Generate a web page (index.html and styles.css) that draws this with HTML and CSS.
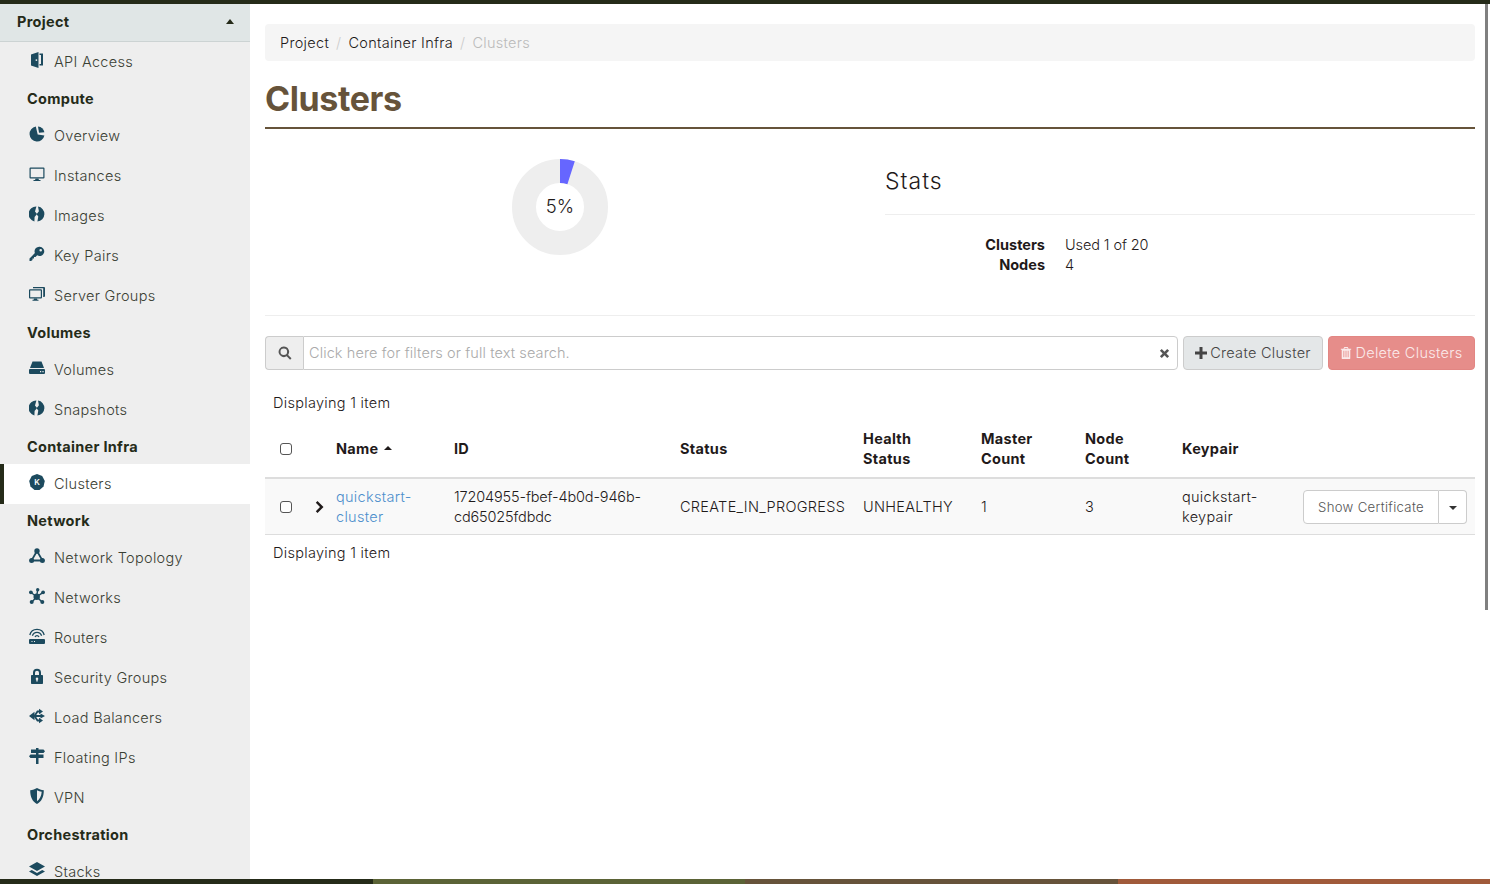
FILE: index.html
```html
<!DOCTYPE html>
<html lang="en">
<head>
    <meta charset="UTF-8">
    <title>Clusters</title>
    <link rel="stylesheet" href="styles.css">
</head>
<body>
    <div class="topbar"></div>
    <div class="layout">
        <nav class="sidebar">
            <div class="nav-project"><span>Project</span><i class="caret-up"></i></div>
            <a class="nav-item"><svg class="icon" viewBox="0 0 16 16"><path fill-rule="evenodd" d="M2 2.500 9.500 0v16L2 13.500zM7.400 7.200a.9.9 0 1 0 0 1.800.9.9 0 0 0 0-1.800z"/><path d="M10.500 1.500H14v12h-3.500v-1.600H12V3h-1.500z"/></svg>API Access</a>
            <div class="nav-group">Compute</div>
            <a class="nav-item"><svg class="icon" viewBox="0 0 16 16"><path d="M6.800 .6A7.500 7.500 0 1 0 15.400 9.500L8.700 8.500z"/><path d="M9 .6 10 6.800 15.400 6.300A7.500 7.500 0 0 0 9 .6z"/></svg>Overview</a>
            <a class="nav-item"><svg class="icon" viewBox="0 0 16 16"><path fill-rule="evenodd" d="M1.500 1.500h13a1 1 0 0 1 1 1v9a1 1 0 0 1-1 1h-13a1 1 0 0 1-1-1v-9a1 1 0 0 1 1-1zm.2 1.300v8.400h12.600V2.800z"/><path d="M6.500 12.500h3l.4 1.500h1.600v1h-7v-1h1.600z"/></svg>Instances</a>
            <a class="nav-item"><svg class="icon" viewBox="0 0 16 16"><path d="M7.400 .6 6 5.500l2 2.400-2.400 3-.2 4.500A7.500 7.500 0 0 1 7.400 .6z"/><path d="M9 .6a7.500 7.500 0 0 1-.6 14.900l.9-4.900-1.700-2.400 2.300-2.900z"/></svg>Images</a>
            <a class="nav-item"><svg class="icon" viewBox="0 0 16 16"><path fill-rule="evenodd" d="M10.700 .8a4.600 4.600 0 1 1-2.500 8.500L6.500 11H5v1.500H3.500V14L2 15H.5v-2.500l5.400-5.400a4.600 4.600 0 0 1 4.800-6.300zM11.700 3a1.300 1.300 0 1 0 0 2.600 1.300 1.300 0 0 0 0-2.600z"/></svg>Key Pairs</a>
            <a class="nav-item"><svg class="icon" viewBox="0 0 16 16"><path d="M4 1h11a1 1 0 0 1 1 1v8a1 1 0 0 1-1 1h-.8V2.200H4z"/><path fill-rule="evenodd" d="M1 3.300h11a1 1 0 0 1 1 1v7.200a1 1 0 0 1-1 1H1a1 1 0 0 1-1-1V4.300a1 1 0 0 1 1-1zm.2 1.200v6.800h10.600V4.500z"/><path d="M5 12.500h3l.3 1.200h1.200v1h-6v-1h1.200z"/></svg>Server Groups</a>
            <div class="nav-group">Volumes</div>
            <a class="nav-item"><svg class="icon" viewBox="0 0 16 16"><path d="M3.500 1.500h9L15 8H1z"/><path fill-rule="evenodd" d="M1 9h14a1 1 0 0 1 1 1v3a1 1 0 0 1-1 1H1a1 1 0 0 1-1-1v-3a1 1 0 0 1 1-1zm10 2v1.200h1.200V11zm2.400 0v1.200h1.200V11z"/></svg>Volumes</a>
            <a class="nav-item"><svg class="icon" viewBox="0 0 16 16"><path d="M7.400 .6 6 5.500l2 2.400-2.400 3-.2 4.500A7.500 7.500 0 0 1 7.400 .6z"/><path d="M9 .6a7.500 7.500 0 0 1-.6 14.900l.9-4.900-1.700-2.400 2.300-2.900z"/></svg>Snapshots</a>
            <div class="nav-group">Container Infra</div>
            <a class="nav-item active"><svg class="icon" viewBox="0 0 16 16"><path d="M8 0l5.200 2.100 2.600 5-1.300 5.400L10.500 16h-5l-4-3.500L.2 7.100l2.600-5z"/><text class="icon-k" x="8" y="10.800" text-anchor="middle">K</text></svg>Clusters</a>
            <div class="nav-group">Network</div>
            <a class="nav-item"><svg class="icon" viewBox="0 0 16 16"><path d="M8 3 2.500 12.500h11z" fill="none" stroke="#1c4a5e" stroke-width="1.800"/><circle cx="8" cy="3" r="2.700"/><circle cx="2.600" cy="12.500" r="2.500"/><circle cx="13.400" cy="12.500" r="2.500"/></svg>Network Topology</a>
            <a class="nav-item"><svg class="icon" viewBox="0 0 16 16"><path d="M7.700 8.700 8.700 1.300M7.700 8.700 1.700 4.300M7.700 8.700 14.300 4.300M7.700 8.700 2.700 14.300M7.700 8.700 13.300 14.300" stroke="#1c4a5e" stroke-width="1.400"/><circle cx="7.700" cy="8.700" r="3.200"/><circle cx="8.700" cy="1.700" r="1.700"/><circle cx="1.900" cy="4.300" r="1.900"/><circle cx="14.100" cy="4.300" r="1.900"/><circle cx="2.700" cy="14" r="2"/><circle cx="13.300" cy="14" r="2"/></svg>Networks</a>
            <a class="nav-item"><svg class="icon" viewBox="0 0 16 16"><path d="M.8 7A7.400 7.400 0 0 1 15.200 7M3.400 7.800A4.800 4.800 0 0 1 12.600 7.800M6 9A2.200 2.200 0 0 1 10 9" fill="none" stroke="#1c4a5e" stroke-width="1.300"/><path fill-rule="evenodd" d="M1 11h14a1 1 0 0 1 1 1v3a1 1 0 0 1-1 1H1a1 1 0 0 1-1-1v-3a1 1 0 0 1 1-1zm1.500 2v1h1v-1zm2.500 0v1h1v-1z"/></svg>Routers</a>
            <a class="nav-item"><svg class="icon" viewBox="0 0 16 16"><path fill-rule="evenodd" d="M4 7V4.800a4 4 0 0 1 8 0V7h1.200a.8 .8 0 0 1 .8 .8v7.400a.8 .8 0 0 1-.8 .8H2.800a.8 .8 0 0 1-.8-.8V7.800a.8 .8 0 0 1 .8-.8zm2 0h4V4.800a2 2 0 0 0-4 0zm2 2.500a1.300 1.300 0 0 0-.7 2.400v1.600h1.400v-1.600A1.300 1.300 0 0 0 8 9.500z"/></svg>Security Groups</a>
            <a class="nav-item"><svg class="icon" viewBox="0 0 16 16"><path d="M5 8h8M5.500 8 8.500 3.500H11M5.500 8 8.500 12.500H11" fill="none" stroke="#1c4a5e" stroke-width="1.800"/><path d="M0 8 5.500 3.800v8.400zM11.500 5.500 16 8l-4.500 2.500zM10 .8 14 3.500 10 6.200zM10 9.800 14 12.500 10 15.200z"/></svg>Load Balancers</a>
            <a class="nav-item"><svg class="icon" viewBox="0 0 16 16"><path d="M7 0h2.500v1.500h5L16 3.300 14.500 5H9.500v1.500h5V10H9.500v6H7v-6H1.500L0 8.300 1.500 6.500H7V5H2V1.500h5z"/></svg>Floating IPs</a>
            <a class="nav-item"><svg class="icon" viewBox="0 0 16 16"><path fill-rule="evenodd" d="M8 0c2 1.300 4.300 2 6.800 2.200C14.800 9 12.500 13.500 8 16 3.500 13.500 1.200 9 1.200 2.200 3.700 2 6 1.300 8 0zm0 2.300v11c2.800-2 4.400-5.300 4.700-9.500C11 3.500 9.400 3 8 2.300z"/></svg>VPN</a>
            <div class="nav-group">Orchestration</div>
            <a class="nav-item"><svg class="icon" viewBox="0 0 16 16"><path d="M8 0l8 4.500-8 4.500-8-4.500zM2.800 8 8 10.900 13.200 8 16 9.500 8 14 0 9.500z"/></svg>Stacks</a>
        </nav>
        <main class="content">
            <div class="breadcrumb">
                <span>Project</span><span class="sep">/</span><span>Container Infra</span><span class="sep">/</span><span class="current">Clusters</span>
            </div>
            <h1 class="page-title">Clusters</h1>
            <section class="quota">
                <div class="quota-chart">
                    <svg class="donut" viewBox="0 0 96 96">
                        <circle cx="48" cy="48" r="36" fill="none" stroke="#eeeeee" stroke-width="24"/>
                        <path d="M48 0A48 48 0 0 1 62.800 2.300L55.400 25.200A24 24 0 0 0 48 24z" fill="#6666ff"/>
                        <text class="donut-label" x="48" y="54" text-anchor="middle">5%</text>
                    </svg>
                </div>
                <div class="quota-stats">
                    <h2 class="stats-title">Stats</h2>
                    <dl class="stats-list">
                        <dt>Clusters</dt><dd>Used 1 of 20</dd>
                        <dt>Nodes</dt><dd>4</dd>
                    </dl>
                </div>
            </section>
            <div class="toolbar">
                <div class="search">
                    <span class="search-addon"><svg class="tool-icon" viewBox="0 0 14 14"><path fill-rule="evenodd" d="M5.800 .5a5.300 5.300 0 0 1 4.300 8.400l3.400 3.400-1.400 1.400-3.400-3.400A5.300 5.300 0 1 1 5.800 .5zm0 2a3.300 3.300 0 1 0 0 6.600 3.300 3.300 0 0 0 0-6.600z"/></svg></span>
                    <div class="search-input"><span>Click here for filters or full text search.</span><svg class="clear-icon" viewBox="0 0 12 12"><path d="M3 1 6 4l3-3 2 2-3 3 3 3-2 2-3-3-3 3-2-2 3-3-3-3z"/></svg></div>
                </div>
                <button class="btn btn-create"><svg class="btn-icon" viewBox="0 0 12 12"><path d="M4.500 0h3v4.500H12v3H7.500V12h-3V7.500H0v-3h4.500z"/></svg>Create Cluster</button>
                <button class="btn btn-delete"><svg class="btn-icon" viewBox="0 0 12 14"><path fill-rule="evenodd" d="M4 0h4l1 2h3v1.200h-1V13a1 1 0 0 1-1 1H2a1 1 0 0 1-1-1V3.200H0V2h3zM4.500 1.200 4.200 2h3.600l-.3-.8zM3 4.500v7.500h1V4.500zm2.500 0v7.500h1V4.500zm2.500 0v7.500h1V4.500z"/></svg>Delete Clusters</button>
            </div>
            <div class="count">Displaying 1 item</div>
            <table class="clusters">
                <colgroup>
                    <col class="c-check"><col class="c-expand"><col class="c-name"><col class="c-id"><col class="c-status"><col class="c-health"><col class="c-master"><col class="c-node"><col class="c-key"><col class="c-actions">
                </colgroup>
                <thead>
                    <tr>
                        <th class="check-cell"><input type="checkbox"></th>
                        <th></th>
                        <th>Name <i class="caret-sort"></i></th>
                        <th>ID</th>
                        <th>Status</th>
                        <th>Health<br>Status</th>
                        <th>Master<br>Count</th>
                        <th>Node<br>Count</th>
                        <th>Keypair</th>
                        <th></th>
                    </tr>
                </thead>
                <tbody>
                    <tr>
                        <td class="check-cell"><input type="checkbox"></td>
                        <td class="expand-cell"><svg class="chevron" viewBox="0 0 10 14"><path d="M2.500 1 8.500 7l-6 6L.8 11.300 5 7 .8 2.700z"/></svg></td>
                        <td><a class="link">quickstart-<br>cluster</a></td>
                        <td class="id-cell">17204955-fbef-4b0d-946b-<br>cd65025fdbdc</td>
                        <td>CREATE_IN_PROGRESS</td>
                        <td>UNHEALTHY</td>
                        <td>1</td>
                        <td>3</td>
                        <td>quickstart-<br>keypair</td>
                        <td class="actions-cell">
                            <div class="btn-group">
                                <button class="btn-action">Show Certificate</button>
                                <button class="btn-split"><i class="caret-down"></i></button>
                            </div>
                        </td>
                    </tr>
                </tbody>
            </table>
            <div class="count count-bottom">Displaying 1 item</div>
        </main>
    </div>
    <div class="scrollbar"></div>
    <div class="bottombar">
        <span class="seg-1"></span><span class="seg-2"></span><span class="seg-3"></span><span class="seg-4"></span>
    </div>
</body>
</html>
```

FILE: styles.css
```css
* {
    box-sizing: border-box;
}
html, body {
    height: 100%;
}
body {
    margin: 0;
    display: flex;
    flex-direction: column;
    overflow: hidden;
    position: relative;
    background: #fff;
    color: #1f1a1a;
    font-family: Inter, "Open Sans", sans-serif;
    font-size: 14.5px;
    font-weight: 300;
    line-height: 20px;
    letter-spacing: 0.3px;
}
.topbar {
    height: 4px;
    flex: none;
    background: #252b19;
}
.layout {
    flex: 1;
    display: flex;
    min-height: 0;
}
.bottombar {
    height: 5px;
    flex: none;
    display: flex;
}
.bottombar span {
    flex: 1;
}
.seg-1 { background: #252b19; }
.seg-2 { background: #5b6336; }
.seg-3 { background: #66533a; }
.seg-4 { background: #a05a3a; }
.scrollbar {
    position: absolute;
    top: 4px;
    right: 2px;
    width: 3px;
    height: 606px;
    background: #808080;
}

/* sidebar */
.sidebar {
    width: 250px;
    flex: none;
    background: #eeeeee;
    color: #3a4034;
    overflow: hidden;
}
.nav-project {
    height: 38px;
    padding: 0 16px 2px 17px;
    display: flex;
    align-items: center;
    justify-content: space-between;
    background: #e0e6e6;
    border-bottom: 1px solid #ccd3d3;
    color: #252b19;
    font-weight: 700;
}
.caret-up {
    width: 0;
    height: 0;
    border-left: 4.500px solid transparent;
    border-right: 4.500px solid transparent;
    border-bottom: 5px solid #252b19;
}
.nav-group {
    height: 34px;
    padding-left: 27px;
    display: flex;
    align-items: center;
    color: #252b19;
    font-weight: 700;
}
.nav-item {
    height: 40px;
    padding-left: 29px;
    display: flex;
    align-items: center;
    gap: 9px;
}
.nav-item.active {
    background: #fff;
    border-left: 4px solid #252b19;
    padding-left: 25px;
}
.icon {
    width: 16px;
    height: 16px;
    flex: none;
    margin-bottom: 4px;
    fill: #1c4a5e;
}
.icon-k {
    fill: #fff;
    font-size: 8px;
    font-weight: 600;
    letter-spacing: 0;
}

/* main */
.content {
    flex: 1;
    min-width: 0;
    padding: 20px 15px 0;
}
.breadcrumb {
    height: 37px;
    padding: 0 15px;
    display: flex;
    align-items: center;
    background: #f5f5f5;
    border-radius: 4px;
}
.sep {
    padding: 0 7px;
    color: #ccc;
}
.current {
    color: #bbb;
}
.page-title {
    margin: 0;
    height: 68px;
    padding-top: 19px;
    border-bottom: 2px solid #66533a;
    color: #66533a;
    font-size: 34px;
    line-height: 38px;
    font-weight: 700;
    letter-spacing: -0.4px;
}
.quota {
    height: 187px;
    display: flex;
    border-bottom: 1px solid #eeeeee;
}
.quota-chart {
    width: 590px;
    padding-top: 30px;
    display: flex;
    justify-content: center;
}
.donut {
    width: 96px;
    height: 96px;
}
.donut-label {
    font-size: 18.500px;
    fill: #1f1a1a;
    letter-spacing: 0;
}
.quota-stats {
    margin-left: 30px;
    flex: 1;
}
.stats-title {
    margin: 0;
    height: 86px;
    padding-top: 38px;
    border-bottom: 1px solid #eeeeee;
    font-size: 23px;
    line-height: 28px;
    font-weight: 300;
    letter-spacing: 1px;
}
.stats-list {
    margin: 20px 0 0;
    display: grid;
    grid-template-columns: 160px 1fr;
    column-gap: 20px;
}
.stats-list dt {
    text-align: right;
    font-weight: 700;
    letter-spacing: 0;
}
.stats-list dd {
    margin: 0;
    letter-spacing: -0.1px;
}

/* search + buttons */
.toolbar {
    margin-top: 20px;
    height: 34px;
    display: flex;
    gap: 5px;
}
.search {
    flex: 1;
    display: flex;
}
.search-addon {
    width: 38px;
    flex: none;
    display: flex;
    align-items: center;
    justify-content: center;
    background: #eeeeee;
    border: 1px solid #ccc;
    border-right: 0;
    border-radius: 4px 0 0 4px;
}
.tool-icon {
    width: 14px;
    height: 14px;
    fill: #555;
}
.search-input {
    flex: 1;
    padding: 0 7px 0 5px;
    display: flex;
    align-items: center;
    justify-content: space-between;
    border: 1px solid #ccc;
    border-radius: 0 4px 4px 0;
    color: #aaa;
    letter-spacing: 0.11px;
}
.clear-icon {
    width: 11px;
    height: 11px;
    fill: #555;
}
.btn {
    height: 34px;
    flex: none;
    padding: 0;
    display: flex;
    align-items: center;
    justify-content: center;
    gap: 3px;
    border: 1px solid #ccc;
    border-radius: 4px;
    font: inherit;
    letter-spacing: inherit;
}
.btn-create {
    width: 140px;
    background: #e4e7e8;
    color: #444;
}
.btn-delete {
    width: 147px;
    background: #e68d8a;
    border-color: #e28683;
    color: #fbeaea;
}
.btn-icon {
    width: 12px;
    height: 12px;
    fill: currentColor;
}
.count {
    margin-top: 23px;
    padding-left: 8px;
}

/* table */
.clusters {
    width: 100%;
    margin-top: 11px;
    border-collapse: collapse;
    table-layout: fixed;
}
.c-check { width: 40px; }
.c-expand { width: 23px; }
.c-name { width: 118px; }
.c-id { width: 226px; }
.c-status { width: 183px; }
.c-health { width: 118px; }
.c-master { width: 104px; }
.c-node { width: 97px; }
.c-key { width: 121px; }
.clusters th {
    height: 54px;
    padding: 0 8px 4px;
    text-align: left;
    font-weight: 700;
    border-bottom: 2px solid #dddddd;
}
.clusters td {
    height: 56px;
    padding: 2px 8px 0;
    background: #f9f9f9;
    border-bottom: 1px solid #dddddd;
}
.clusters input {
    appearance: none;
    margin: 0;
    width: 12px;
    height: 12px;
    display: block;
    background: #fff;
    border: 1.500px solid #555;
    border-radius: 3px;
}
.check-cell {
    padding-left: 15px !important;
}
.expand-cell {
    padding: 2px 0 0 !important;
}
.id-cell {
    letter-spacing: -0.15px;
}
.chevron {
    width: 10px;
    height: 14px;
    display: block;
    margin-left: 10px;
    fill: #1f1a1a;
}
.caret-sort {
    display: inline-block;
    vertical-align: 4px;
    margin-left: 2px;
    border-left: 4.500px solid transparent;
    border-right: 4.500px solid transparent;
    border-bottom: 4.500px solid #1f1a1a;
}
.link {
    color: #4d8fcc;
}
.btn-group {
    display: flex;
    height: 34px;
}
.btn-action {
    width: 136px;
    background: #fff;
    border: 1px solid #ccc;
    border-radius: 4px 0 0 4px;
    color: #555;
    font: inherit;
    font-size: 13.200px;
    letter-spacing: inherit;
}
.btn-split {
    width: 28px;
    background: #fff;
    border: 1px solid #ccc;
    border-left: 0;
    border-radius: 0 4px 4px 0;
    padding: 0;
}
.caret-down {
    display: inline-block;
    vertical-align: middle;
    border-left: 4px solid transparent;
    border-right: 4px solid transparent;
    border-top: 4px solid #333;
}
.count-bottom {
    margin-top: 8px;
}
```
